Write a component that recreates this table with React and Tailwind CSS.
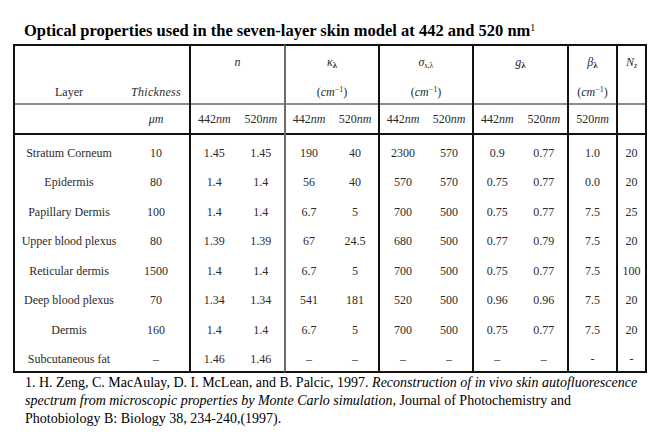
import React from "react"

const rows = [
    ["Stratum Corneum", "10", "1.45", "1.45", "190", "40", "2300", "570", "0.9", "0.77", "1.0", "20"],
    ["Epidermis", "80", "1.4", "1.4", "56", "40", "570", "570", "0.75", "0.77", "0.0", "20"],
    ["Papillary Dermis", "100", "1.4", "1.4", "6.7", "5", "700", "500", "0.75", "0.77", "7.5", "25"],
    ["Upper blood plexus", "80", "1.39", "1.39", "67", "24.5", "680", "500", "0.77", "0.79", "7.5", "20"],
    ["Reticular dermis", "1500", "1.4", "1.4", "6.7", "5", "700", "500", "0.75", "0.77", "7.5", "100"],
    ["Deep blood plexus", "70", "1.34", "1.34", "541", "181", "520", "500", "0.96", "0.96", "7.5", "20"],
    ["Dermis", "160", "1.4", "1.4", "6.7", "5", "700", "500", "0.75", "0.77", "7.5", "20"],
    ["Subcutaneous fat", "–", "1.46", "1.46", "–", "–", "–", "–", "–", "–", "-", "-"],
]

const CmInv = () => (
    <span>
        (<i>cm</i><sup className="text-[8px]">−1</sup>)
    </span>
)

const Nm = ({ v }) => (
    <span>
        {v}
        <i>nm</i>
    </span>
)

const groups = [
    {
        box: "w-[176px] border-l-2",
        top: null,
        bottom: (
            <div className="flex w-full">
                <div className="w-[108px] text-center">Layer</div>
                <div className="w-[66px] text-center italic tracking-wide">Thickness</div>
            </div>
        ),
        units: [null, <i key="u">μm</i>],
        cols: ["w-[108px]", "w-[66px]"],
        idx: [0, 1],
    },
    {
        box: "w-[95px] border-l-2",
        top: <i>n</i>,
        bottom: null,
        units: [<Nm key="a" v="442" />, <Nm key="b" v="520" />],
        cols: ["flex-1", "flex-1"],
        idx: [2, 3],
    },
    {
        box: "w-[94px] border-l-2 border-l-[#6b6b6b]",
        top: <span><i>κ</i><sub className="text-[9px] font-bold">λ</sub></span>,
        bottom: <CmInv />,
        units: [<Nm key="a" v="442" />, <Nm key="b" v="520" />],
        cols: ["flex-1", "flex-1"],
        idx: [4, 5],
    },
    {
        box: "w-[94px] border-l-2",
        top: <span><i>σ</i><sub className="text-[8px]"><i>s</i>,λ</sub></span>,
        bottom: <CmInv />,
        units: [<Nm key="a" v="442" />, <Nm key="b" v="520" />],
        cols: ["flex-1", "flex-1"],
        idx: [6, 7],
    },
    {
        box: "w-[95px] border-l-2",
        top: <span><i>g</i><sub className="text-[9px] font-bold">λ</sub></span>,
        bottom: null,
        units: [<Nm key="a" v="442" />, <Nm key="b" v="520" />],
        cols: ["flex-1", "flex-1"],
        idx: [8, 9],
    },
    {
        box: "w-[49px] border-l-2",
        top: <span><i>β</i><sub className="text-[9px] font-bold">λ</sub></span>,
        bottom: <CmInv />,
        units: [<Nm key="a" v="520" />],
        cols: ["flex-1"],
        idx: [10],
    },
    {
        box: "w-[31px] border-l-2 border-r-2",
        top: <span><i>N</i><sub className="text-[8px]"><i>z</i></sub></span>,
        bottom: null,
        units: [null],
        cols: ["flex-1"],
        idx: [11],
    },
]

function Group({ g }) {
    return (
        <div className={`${g.box} flex flex-col border-t-2 border-b-2 border-[#111]`}>
            {/* header */}
            <div className="h-[59px] shrink-0 flex flex-col items-center border-b-2 border-b-[#8c8c8c]">
                <div className="h-[20px] mt-[6px] leading-[20px]">{g.top}</div>
                <div className="h-[20px] mt-[10px] leading-[20px] w-full text-center">{g.bottom}</div>
            </div>
            {/* units */}
            <div className="h-[30px] shrink-0 flex border-b-2 border-b-[#111]">
                {g.units.map((u, i) => (
                    <div key={i} className={`${g.cols[i]} flex items-center justify-center`}>
                        {u}
                    </div>
                ))}
            </div>
            {/* body */}
            <div className="h-[236px] shrink-0 pt-[3px] overflow-hidden">
                {rows.map((r, ri) => (
                    <div key={ri} className="h-[29.5px] flex">
                        {g.idx.map((k, i) => (
                            <div key={k} className={`${g.cols[i]} flex items-center justify-center whitespace-nowrap`}>
                                {r[k]}
                            </div>
                        ))}
                    </div>
                ))}
            </div>
        </div>
    )
}

export default function App() {
    return (
        <div className="w-[669px] h-[432px] bg-white overflow-hidden font-['Liberation_Serif',serif] text-black">
            <div className="pt-[20px] pl-[24px] h-[40px] leading-[21px] text-[16.5px] font-bold whitespace-nowrap">
                Optical properties used in the seven-layer skin model at 442 and 520 nm
                <sup className="text-[10px] font-normal">1</sup>
            </div>
            <div className="mt-[4px] ml-[13px] flex text-[12px] text-[#2b2b2b]">
                {groups.map((g, i) => (
                    <Group key={i} g={g} />
                ))}
            </div>
            <div className="pl-[25px] pt-[1px] text-[14px] leading-[18px] whitespace-nowrap">
                1. H. Zeng, C. MacAulay, D. I. McLean, and B. Palcic, 1997.{" "}
                <i>Reconstruction of in vivo skin autofluorescence</i>
                <br />
                <i>spectrum from microscopic properties by Monte Carlo simulation</i>, Journal of Photochemistry and
                <br />
                Photobiology B: Biology 38, 234-240,(1997).
            </div>
        </div>
    )
}
